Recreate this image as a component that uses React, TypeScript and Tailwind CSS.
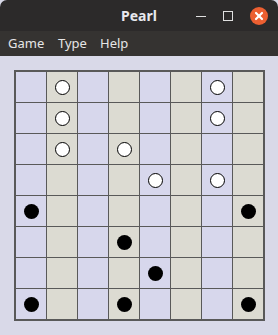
const WHITE: [number, number][] = [
  [0, 1], [0, 6], [1, 1], [1, 6], [2, 1], [2, 3], [3, 4], [3, 6],
];
const BLACK: [number, number][] = [
  [4, 0], [4, 7], [5, 3], [6, 4], [7, 0], [7, 3], [7, 7],
];

function pearlAt(r: number, c: number) {
  if (WHITE.some(([a, b]) => a === r && b === c)) return "white";
  if (BLACK.some(([a, b]) => a === r && b === c)) return "black";
  return null;
}

export default function App() {
  const cells = [];
  for (let r = 0; r < 8; r++) {
    for (let c = 0; c < 8; c++) {
      const p = pearlAt(r, c);
      cells.push(
        <div
          key={`${r}-${c}`}
          className={[
            "flex h-[30px] w-[30px] items-center justify-center",
            c % 2 === 0 ? "bg-[#d7d7ec]" : "bg-[#dcdbd2]",
          ].join(" ")}
        >
          {p === "white" && (
            <div className="h-[15px] w-[15px] rounded-full border border-black bg-white" />
          )}
          {p === "black" && <div className="h-[15px] w-[15px] rounded-full bg-black" />}
        </div>
      );
    }
  }

  return (
    <div className="flex h-[335px] w-[278px] flex-col overflow-hidden bg-[#d9d9e8] font-['Noto_Sans',sans-serif]">
      {/* title bar */}
      <div className="relative flex h-[31px] shrink-0 items-center justify-center rounded-t-[7px] bg-[#2c2a2a]">
        <span className="text-[14px] font-bold text-[#e8e8ee]">Pearl</span>
        <div className="absolute right-[10px] top-0 flex h-full items-center gap-[17px]">
          <div className="mt-[2px] h-px w-[10px] bg-[#e0e0e0]" />
          <div className="h-[10px] w-[10px] border border-[#e0e0e0]" />
          <div className="flex h-[18px] w-[18px] items-center justify-center rounded-full bg-[#ec5f31]">
            <svg width="10" height="10" viewBox="0 0 10 10" stroke="white" strokeWidth="2.2" strokeLinecap="round">
              <line x1="2" y1="2" x2="8" y2="8" />
              <line x1="8" y1="2" x2="2" y2="8" />
            </svg>
          </div>
        </div>
      </div>
      {/* menu bar */}
      <div className="flex h-[25px] shrink-0 items-center bg-[#353331] pl-[8px] text-[13px] text-[#e6e6e6]">
        <span className="w-[50px]">Game</span>
        <span className="w-[42px]">Type</span>
        <span>Help</span>
      </div>
      {/* board */}
      <div className="pl-[14px] pt-[14px]">
        <div className="grid w-max grid-cols-8 gap-px border-2 border-[#595959] bg-[#595959]">
          {cells}
        </div>
      </div>
    </div>
  );
}
